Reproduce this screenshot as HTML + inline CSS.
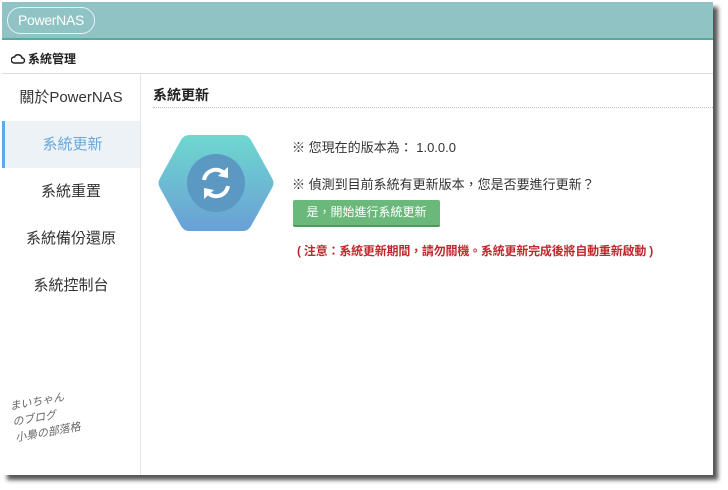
<!DOCTYPE html>
<html><head><meta charset="utf-8"><style>
*{margin:0;padding:0;box-sizing:border-box}
body{width:728px;height:490px;background:#fff;position:relative;overflow:hidden;font-family:"Liberation Sans","Noto Sans CJK TC",sans-serif;color:#333}
.shadow{position:absolute;left:7px;top:7px;width:711px;height:473px;background:#555;filter:blur(2px)}
.frame{position:absolute;left:2px;top:2px;width:711px;height:473px;background:#fff;overflow:hidden}
.hdr{position:absolute;left:0;top:0;width:711px;height:38px;background:#8fc3c4;border-bottom:2px solid #5aa8a3}
.logo{position:absolute;left:5px;top:5px;width:88px;height:27px;border:1.5px solid #eef;border-radius:14px;color:#fff;font-size:14px;line-height:24px;text-align:center;letter-spacing:-.3px}
.bar{position:absolute;left:0;top:40px;width:711px;height:32px;border-bottom:1px solid #ddd;font-size:12px;font-weight:bold;line-height:34px;padding-left:26px;color:#222}
.side{position:absolute;left:0;top:72px;width:139px;height:401px;border-right:1px solid #e3e3e3}
.side div{height:47px;line-height:47px;text-align:center;font-size:15px;color:#333}
.side .act{background:#edf2f7;color:#6aa8d8;border-left:3px solid #5ba7f0}
.title{position:absolute;left:151px;top:83px;font-size:14px;font-weight:bold;color:#222}
.dots{position:absolute;left:151px;top:105px;width:560px;border-top:1px dotted #bbb}
.t{position:absolute;font-size:13px;color:#333}
.btn{position:absolute;left:291px;top:198px;width:147px;height:27px;background:#6ab87a;border-bottom:2px solid #4d9a5f;border-radius:2px;color:#fff;font-size:12px;line-height:25px;text-align:center}
.warn{position:absolute;left:295px;top:240px;font-size:12px;color:#c0282d;font-weight:bold;letter-spacing:-0.2px}
</style></head><body>
<div class="shadow"></div>
<div class="frame">
<div class="hdr"><div class="logo">PowerNAS</div></div>
<div class="bar"><svg style="position:absolute;left:9px;top:11px" width="14" height="11" viewBox="0 0 14 11"><path d="M3 10h8a2.5 2.5 0 0 0 0-5 4 4 0 0 0-7.5-1A3 3 0 0 0 3 10z" fill="none" stroke="#222" stroke-width="1.5"/></svg>系統管理</div>
<div class="side">
<div>關於PowerNAS</div>
<div class="act">系統更新</div>
<div>系統重置</div>
<div>系統備份還原</div>
<div>系統控制台</div>
</div>
<div style="position:absolute;left:10px;top:390px;font-size:11px;color:#666;transform:rotate(-10deg);font-style:italic">まいちゃん<br>のブログ<br>小梟の部落格</div>
<div class="title">系統更新</div>
<div class="dots"></div>
<svg style="position:absolute;left:155px;top:131px" width="118" height="100" viewBox="0 0 118 100">
<defs><linearGradient id="g" x1="0" y1="0" x2="0" y2="1"><stop offset="0" stop-color="#6ed8cf"/><stop offset="1" stop-color="#6a9fd6"/></linearGradient></defs>
<path d="M32 2h54q5 0 8 5l21 38q3 5 0 10l-21 38q-3 5-8 5H32q-5 0-8-5L3 55q-3-5 0-10L24 7q3-5 8-5z" fill="url(#g)"/>
<circle cx="59" cy="50" r="29" fill="#5b98c2"/>
<path d="M47 47a12 12 0 0 1 21-6" fill="none" stroke="#fff" stroke-width="4"/><path d="M71 34l0 11-10-2z" fill="#fff"/>
<path d="M71 53a12 12 0 0 1-21 6" fill="none" stroke="#fff" stroke-width="4"/><path d="M47 66l0-11 10 2z" fill="#fff"/>
</svg>
<div class="t" style="left:290px;top:135px">※ 您現在的版本為： 1.0.0.0</div>
<div class="t" style="left:290px;top:172px">※ 偵測到目前系統有更新版本，您是否要進行更新？</div>
<div class="btn">是，開始進行系統更新</div>
<div class="warn">( 注意：系統更新期間，請勿關機。系統更新完成後將自動重新啟動 )</div>
</div>
</body></html>
